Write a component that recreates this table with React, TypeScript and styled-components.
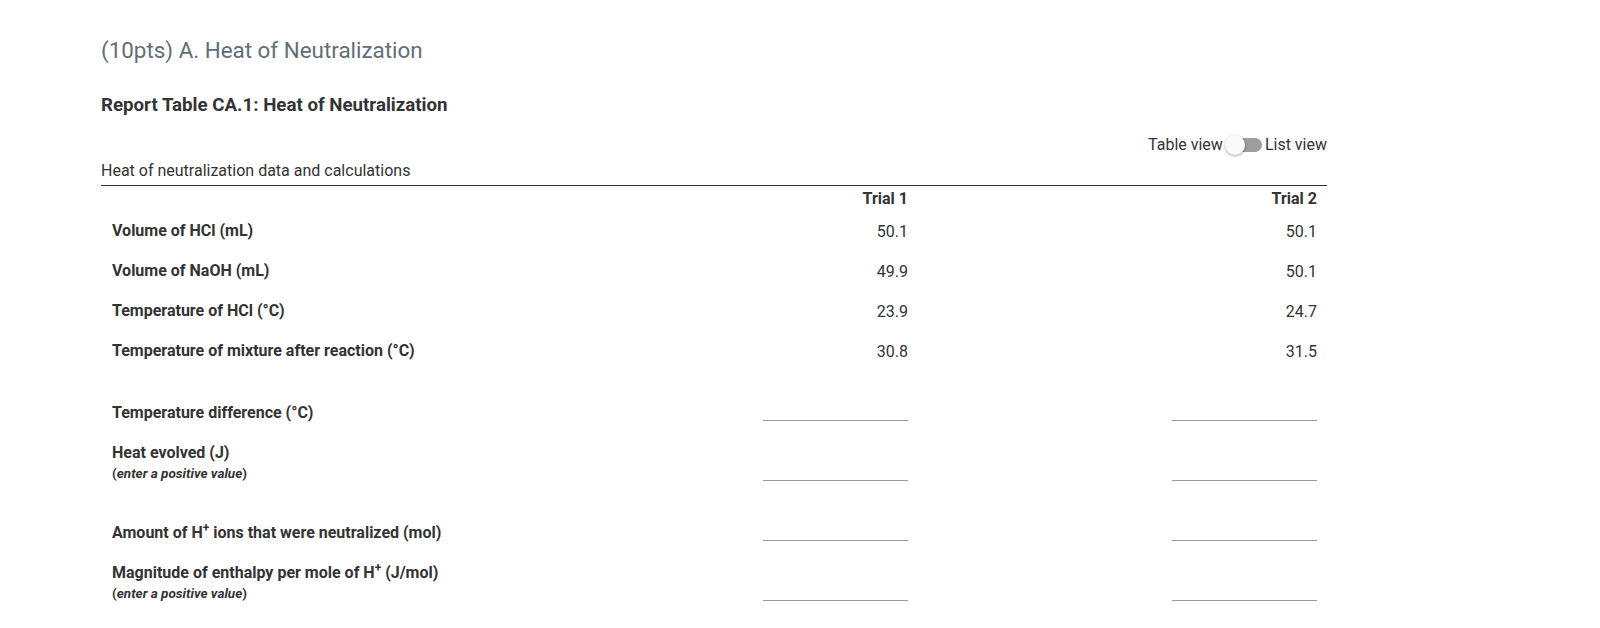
import React from "react";
import styled, { createGlobalStyle } from "styled-components";

const GlobalStyle = createGlobalStyle`
  html, body { margin: 0; padding: 0; background: #fff; }
  body { font-family: Roboto, "Noto Sans", Arial, sans-serif; color: #333; }
`;

const Page = styled.div`
  padding: 37px 0 0 101px;
  width: 1226px;
`;

const Title = styled.h2`
  margin: 0;
  font-size: 22.4px;
  line-height: 26px;
  font-weight: 400;
  color: #5f6e78;
`;

const ReportHeading = styled.h3`
  margin: 31px 0 0;
  font-size: 18.7px;
  line-height: 22px;
  font-weight: 700;
  color: #333;
`;

const ToggleRow = styled.div`
  margin-top: 19px;
  display: flex;
  justify-content: flex-end;
  align-items: center;
  font-size: 16px;
  line-height: 20px;
  color: #333;
`;

const Switch = styled.span`
  position: relative;
  display: inline-block;
  width: 36px;
  height: 14px;
  margin: 0 3px 0 3px;
  border-radius: 7px;
  background: #9e9e9e;
`;

const Thumb = styled.span`
  position: absolute;
  left: -1px;
  top: -3px;
  width: 20px;
  height: 20px;
  border-radius: 50%;
  background: #fafafa;
  box-shadow: 0 1px 3px rgba(0, 0, 0, 0.35);
`;

const Caption = styled.div`
  padding: 6px 0 4px;
  font-size: 16px;
  line-height: 20px;
  color: #333;
  border-bottom: 1px solid #333;
`;

const Grid = styled.div`
  display: grid;
  grid-template-columns: 407px 410px 409px;
`;

const HeadCell = styled.div`
  height: 25px;
  display: flex;
  align-items: center;
  justify-content: flex-end;
  padding-right: 10px;
  font-size: 16px;
  font-weight: 700;
  color: #333;
`;

const Label = styled.div<{ $calc?: boolean }>`
  height: ${(p) => (p.$calc ? 60 : 40)}px;
  box-sizing: border-box;
  padding: 0 0 ${(p) => (p.$calc ? 8 : 0)}px 11px;
  display: flex;
  flex-direction: column;
  justify-content: ${(p) => (p.$calc ? "flex-end" : "center")};
  font-size: 16px;
  line-height: 20px;
  font-weight: 700;
  color: #333;
`;

const Sub = styled.span`
  font-size: 13.5px;
  line-height: 20px;
  font-weight: 700;
  em { font-style: italic; }
`;

const Value = styled.div`
  height: 40px;
  display: flex;
  align-items: center;
  justify-content: flex-end;
  padding-right: 10px;
  font-size: 16px;
  color: #333;
`;

const InputCell = styled.div`
  height: 60px;
  box-sizing: border-box;
  display: flex;
  align-items: flex-end;
  justify-content: flex-end;
  padding: 0 10px 10px 0;
`;

const Blank = styled.input`
  width: 145px;
  height: 24px;
  box-sizing: border-box;
  border: none;
  border-bottom: 1px solid #999;
  outline: none;
  background: transparent;
  font: inherit;
  padding: 0;
`;

const Sup = styled.sup`
  font-size: 12px;
  line-height: 0;
`;

const Hplus = () => (
  <>
    H<Sup>+</Sup>
  </>
);

const dataRows: [string, string, string][] = [
  ["Volume of HCl (mL)", "50.1", "50.1"],
  ["Volume of NaOH (mL)", "49.9", "50.1"],
  ["Temperature of HCl (°C)", "23.9", "24.7"],
  ["Temperature of mixture after reaction (°C)", "30.8", "31.5"],
];

const calcRows: { label: React.ReactNode; sub?: boolean }[] = [
  { label: "Temperature difference (°C)" },
  { label: "Heat evolved (J)", sub: true },
  { label: <>Amount of <Hplus /> ions that were neutralized (mol)</> },
  { label: <>Magnitude of enthalpy per mole of <Hplus /> (J/mol)</>, sub: true },
];

export default function App() {
  return (
    <>
      <GlobalStyle />
      <Page>
        <Title>(10pts) A. Heat of Neutralization</Title>
        <ReportHeading>Report Table CA.1: Heat of Neutralization</ReportHeading>
        <ToggleRow>
          Table view
          <Switch>
            <Thumb />
          </Switch>
          List view
        </ToggleRow>
        <Caption>Heat of neutralization data and calculations</Caption>
        <Grid>
          <div />
          <HeadCell>Trial 1</HeadCell>
          <HeadCell>Trial 2</HeadCell>
          {dataRows.map(([l, a, b]) => (
            <React.Fragment key={l}>
              <Label>{l}</Label>
              <Value>{a}</Value>
              <Value>{b}</Value>
            </React.Fragment>
          ))}
          {calcRows.map((r, i) => (
            <React.Fragment key={i}>
              <Label $calc>
                <span>{r.label}</span>
                {r.sub && (
                  <Sub>
                    (<em>enter a positive value</em>)
                  </Sub>
                )}
              </Label>
              <InputCell>
                <Blank type="text" aria-label="Trial 1" />
              </InputCell>
              <InputCell>
                <Blank type="text" aria-label="Trial 2" />
              </InputCell>
            </React.Fragment>
          ))}
        </Grid>
      </Page>
    </>
  );
}
